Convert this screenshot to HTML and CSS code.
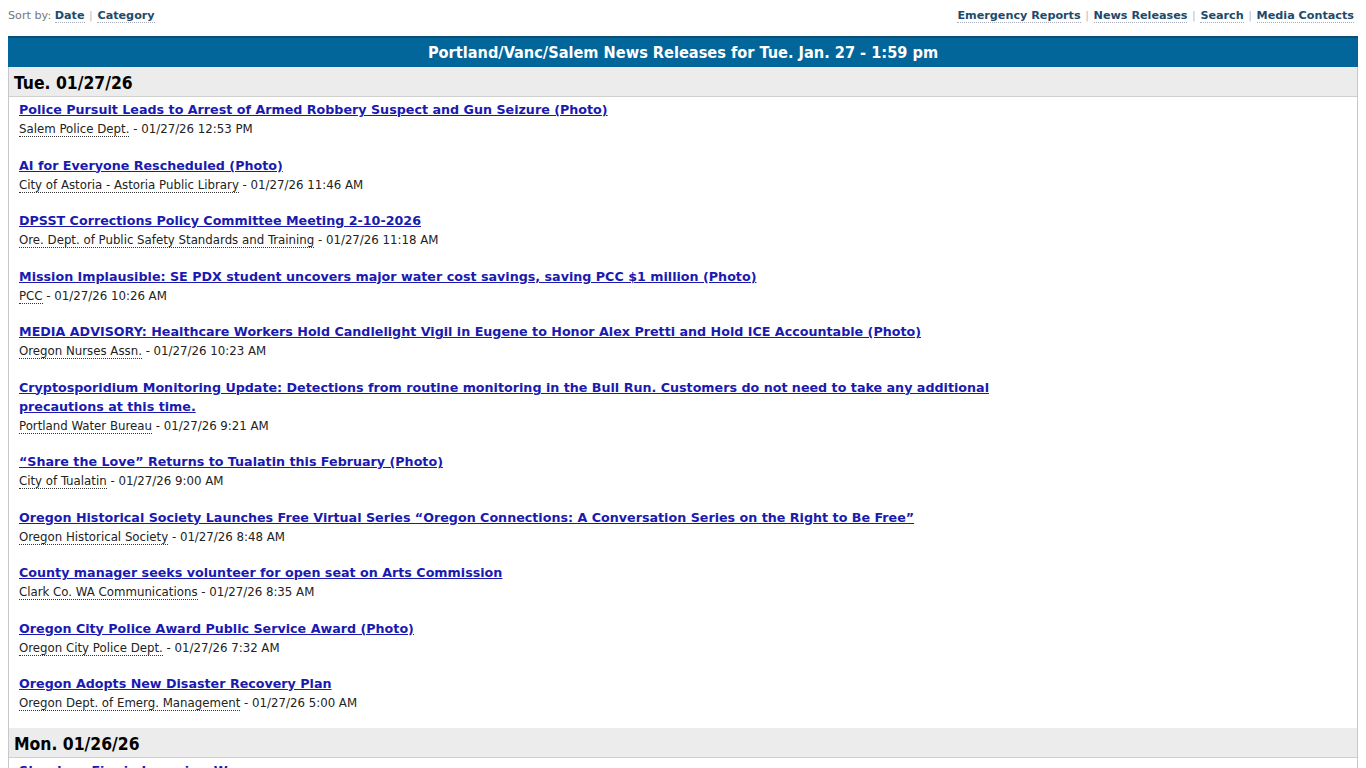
FILE: index.html
```html
<!DOCTYPE html>
<html>
<head>
<meta charset="utf-8">
<link rel="stylesheet" href="styles.css">
</head>
<body>
<div class="topbar">
  <div class="sort">Sort by: <a href="#">Date</a> <span class="sep">|</span> <a href="#">Category</a></div>
  <div class="nav"><a href="#">Emergency Reports</a> <span class="sep">|</span> <a href="#">News Releases</a> <span class="sep">|</span> <a href="#">Search</a> <span class="sep">|</span> <a href="#">Media Contacts</a></div>
</div>
<div class="box">
  <div class="head">Portland/Vanc/Salem News Releases for Tue. Jan. 27 - 1:59 pm</div>
  <div class="day">Tue. 01/27/26</div>
  <ul class="list">
    <li><a class="t" href="#">Police Pursuit Leads to Arrest of Armed Robbery Suspect and Gun Seizure (Photo)</a><div class="m"><span class="src">Salem Police Dept.</span> - 01/27/26 12:53 PM</div></li>
    <li><a class="t" href="#">AI for Everyone Rescheduled (Photo)</a><div class="m"><span class="src">City of Astoria - Astoria Public Library</span> - 01/27/26 11:46 AM</div></li>
    <li><a class="t" href="#">DPSST Corrections Policy Committee Meeting 2-10-2026</a><div class="m"><span class="src">Ore. Dept. of Public Safety Standards and Training</span> - 01/27/26 11:18 AM</div></li>
    <li><a class="t" href="#">Mission Implausible: SE PDX student uncovers major water cost savings, saving PCC $1 million (Photo)</a><div class="m"><span class="src">PCC</span> - 01/27/26 10:26 AM</div></li>
    <li><a class="t" href="#">MEDIA ADVISORY: Healthcare Workers Hold Candlelight Vigil in Eugene to Honor Alex Pretti and Hold ICE Accountable (Photo)</a><div class="m"><span class="src">Oregon Nurses Assn.</span> - 01/27/26 10:23 AM</div></li>
    <li><a class="t" href="#">Cryptosporidium Monitoring Update: Detections from routine monitoring in the Bull Run. Customers do not need to take any additional precautions at this time.</a><div class="m"><span class="src">Portland Water Bureau</span> - 01/27/26 9:21 AM</div></li>
    <li><a class="t" href="#">“Share the Love” Returns to Tualatin this February (Photo)</a><div class="m"><span class="src">City of Tualatin</span> - 01/27/26 9:00 AM</div></li>
    <li><a class="t" href="#">Oregon Historical Society Launches Free Virtual Series “Oregon Connections: A Conversation Series on the Right to Be Free”</a><div class="m"><span class="src">Oregon Historical Society</span> - 01/27/26 8:48 AM</div></li>
    <li><a class="t" href="#">County manager seeks volunteer for open seat on Arts Commission</a><div class="m"><span class="src">Clark Co. WA Communications</span> - 01/27/26 8:35 AM</div></li>
    <li><a class="t" href="#">Oregon City Police Award Public Service Award (Photo)</a><div class="m"><span class="src">Oregon City Police Dept.</span> - 01/27/26 7:32 AM</div></li>
    <li><a class="t" href="#">Oregon Adopts New Disaster Recovery Plan</a><div class="m"><span class="src">Oregon Dept. of Emerg. Management</span> - 01/27/26 5:00 AM</div></li>
  </ul>
  <div class="day">Mon. 01/26/26</div>
  <ul class="list">
    <li><a class="t" href="#">Structure Fire in Longview Wa</a><div class="m"><span class="src">Longview Fire Dept.</span> - 01/26/26 10:41 PM</div></li>
  </ul>
</div>
</body>
</html>
```

FILE: styles.css
```css
body {
  margin: 0 8px;
  background: #fff;
  font-family: "DejaVu Sans", Verdana, sans-serif;
  color: #000;
}
.topbar {
  display: flex;
  justify-content: space-between;
  align-items: center;
  height: 30px;
  font-size: 11.2px;
}
.sort { color: #777; }
.topbar a {
  color: #1d4a6a;
  font-weight: bold;
  text-decoration: none;
  border-bottom: 1px dotted #aab;
}
.topbar .sep { color: #bbb; padding: 0 1px; }
.nav { padding-right: 4px; }
.box {
  margin-top: 6px;
  border-left: 1px solid #c8c8c8;
  border-right: 1px solid #c8c8c8;
}
.head {
  background: #02669b;
  border-top: 2px solid #0d4f74;
  color: #fff;
  text-align: center;
  font-family: "DejaVu Sans Condensed", "DejaVu Sans", sans-serif;
  font-weight: bold;
  font-size: 16.2px;
  height: 29px;
  line-height: 29px;
  margin: 0 -1px;
}
.day {
  background: #ececec;
  border-bottom: 1px solid #cfcfcf;
  font-family: "DejaVu Sans Condensed", "DejaVu Sans", sans-serif;
  font-weight: bold;
  font-size: 17.4px;
  height: 29px;
  line-height: 33px;
  padding-left: 5px;
}
.list {
  list-style: none;
  margin: 0;
  padding: 3px 0 16px 10px;
  max-width: 980px;
}
.list li {
  margin-bottom: 17.5px;
}
.list li:last-child { margin-bottom: 0; }
.t {
  display: block;
  color: #1a1ab0;
  font-weight: bold;
  font-size: 12.7px;
  line-height: 19px;
  text-decoration: underline;
}
.m {
  font-family: "DejaVu Sans Condensed", "DejaVu Sans", sans-serif;
  font-size: 13.1px;
  line-height: 19px;
  color: #222;
}
.src { border-bottom: 1px dotted #333; }
```
